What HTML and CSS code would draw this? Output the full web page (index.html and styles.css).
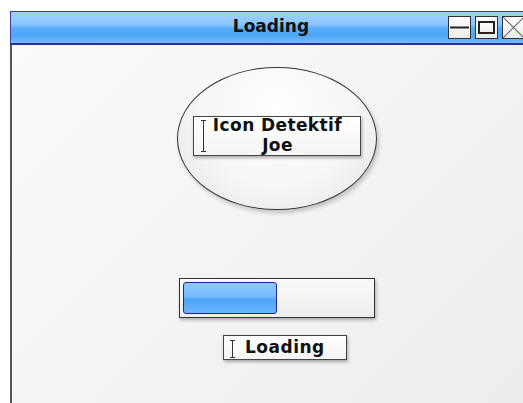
FILE: index.html
```html
<!DOCTYPE html>
<html>
<head>
<meta charset="utf-8">
<title>Loading</title>
<link rel="stylesheet" href="styles.css">
</head>
<body>
<div class="window">
  <div class="titlebar">
    <div class="title">Loading</div>
    <div class="controls">
      <div class="ctl"><svg width="21" height="21" viewBox="0 0 21 21"><line x1="1" y1="10.5" x2="20" y2="10.5" stroke="#222" stroke-width="2"/></svg></div>
      <div class="ctl"><svg width="21" height="21" viewBox="0 0 21 21"><rect x="3" y="5" width="15" height="11" fill="none" stroke="#222" stroke-width="2"/></svg></div>
      <div class="ctl"><svg width="21" height="21" viewBox="0 0 21 21"><path d="M0 0 L21 21 M21 0 L0 21" stroke="#666" stroke-width="1.1"/></svg></div>
    </div>
  </div>
  <div class="content">
    <div class="badge">
      <div class="field field-name">
        <span class="caret"></span>
        <span class="field-text">Icon Detektif<br>Joe</span>
      </div>
    </div>
    <div class="progress">
      <div class="progress-fill" style="width: 94px"></div>
    </div>
    <div class="field field-status">
      <span class="caret"></span>
      <span class="field-text">Loading</span>
    </div>
  </div>
</div>
</body>
</html>
```
FILE: styles.css
```css
html, body {
  margin: 0;
  padding: 0;
  background: #ffffff;
  overflow: hidden;
  width: 523px;
  height: 403px;
  font-family: "DejaVu Sans", "Liberation Sans", sans-serif;
}

.window {
  margin: 11px 0 0 10px;
  width: 540px;
  height: 420px;
  display: flex;
  flex-direction: column;
}

.titlebar {
  position: relative;
  height: 31px;
  border: 1px solid #3a3aa8;
  border-bottom: 2px solid #2e2e9e;
  background: linear-gradient(to bottom, #9fd2ff 0%, #8ac6fd 40%, #5aaef9 52%, #4ea6f7 75%, #74bcfb 100%);
  display: flex;
  align-items: center;
}

.title {
  position: absolute;
  left: 0;
  width: 520px;
  text-align: center;
  font-weight: bold;
  font-size: 17px;
  color: #111;
  top: 4px;
}

.controls {
  margin-left: auto;
  margin-right: 24px;
  display: flex;
  gap: 4px;
}

.ctl {
  width: 21px;
  height: 21px;
  border: 1px solid #333;
  background: linear-gradient(to bottom, #ffffff, #ececec);
  display: flex;
}

.content {
  flex: 1;
  border-left: 2px solid #555;
  background: linear-gradient(135deg, #fbfbfb 0%, #f3f3f3 50%, #ececec 100%);
  display: flex;
  flex-direction: column;
  padding-left: 165px;
}

.badge {
  margin-top: 22px;
  width: 200px;
  height: 143px;
  border: 1px solid #333;
  border-radius: 50%;
  background: radial-gradient(ellipse at 50% 30%, #ffffff 0%, #f6f6f6 55%, #e4e4e4 100%);
  box-shadow: 2px 3px 4px rgba(0, 0, 0, 0.2);
  display: flex;
  align-items: center;
  padding-left: 15px;
  box-sizing: border-box;
}

.field {
  background: linear-gradient(to bottom, #ffffff, #f4f4f4);
  border: 1px solid #444;
  box-shadow: 1px 2px 3px rgba(0, 0, 0, 0.3);
  display: flex;
  align-items: center;
  box-sizing: border-box;
  font-weight: bold;
  color: #111;
}

.field-name {
  width: 168px;
  height: 40px;
  margin-top: -5px;
  padding-left: 7px;
}

.field-name .field-text {
  flex: 1;
  text-align: center;
  font-size: 17px;
  letter-spacing: 0.4px;
  line-height: 20px;
  margin-top: -2px;
  margin-left: -11px;
}

.caret {
  width: 5px;
  height: 32px;
  border-top: 1px solid #333;
  border-bottom: 1px solid #333;
  box-sizing: border-box;
  position: relative;
  flex: none;
}

.caret::after {
  content: "";
  position: absolute;
  left: 2px;
  top: 0;
  bottom: 0;
  width: 1px;
  background: #333;
}

.progress {
  margin-top: 68px;
  margin-left: 2px;
  width: 196px;
  height: 40px;
  border: 1px solid #333;
  background: linear-gradient(to bottom, #fafafa, #ededed);
  box-shadow: 1px 2px 3px rgba(0, 0, 0, 0.3);
  box-sizing: border-box;
  padding: 3px;
  display: flex;
}

.progress-fill {
  border: 1px solid #22229a;
  border-radius: 3px;
  background: linear-gradient(to bottom, #8ec9ff 0%, #78bcfd 45%, #4ea4f6 55%, #6ab6fb 100%);
  box-sizing: border-box;
}

.field-status {
  margin-top: 17px;
  margin-left: 46px;
  width: 124px;
  height: 25px;
  padding-left: 6px;
}

.field-status .caret {
  height: 18px;
  margin-top: 2px;
}

.field-status .field-text {
  font-size: 17px;
  margin-left: 10px;
  margin-top: -2px;
  letter-spacing: 0.5px;
}
```
